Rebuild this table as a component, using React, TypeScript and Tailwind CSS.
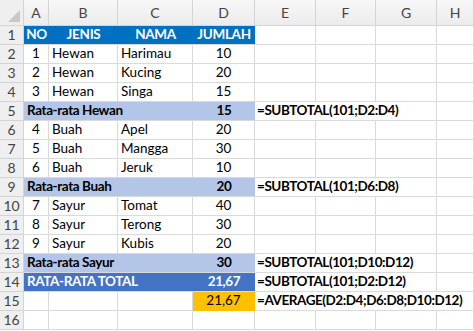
import type { ReactNode } from 'react';

const COLS = ['A', 'B', 'C', 'D', 'E', 'F', 'G', 'H'];

type Row =
  | { kind: 'head' }
  | { kind: 'data'; no: string; jenis: string; nama: string; jumlah: string }
  | { kind: 'sub'; label: string; value: string; formula: string; total?: boolean }
  | { kind: 'avg'; value: string; formula: string }
  | { kind: 'empty' };

const ROWS: Row[] = [
  { kind: 'head' },
  { kind: 'data', no: '1', jenis: 'Hewan', nama: 'Harimau', jumlah: '10' },
  { kind: 'data', no: '2', jenis: 'Hewan', nama: 'Kucing', jumlah: '20' },
  { kind: 'data', no: '3', jenis: 'Hewan', nama: 'Singa', jumlah: '15' },
  { kind: 'sub', label: 'Rata-rata Hewan', value: '15', formula: '=SUBTOTAL(101;D2:D4)' },
  { kind: 'data', no: '4', jenis: 'Buah', nama: 'Apel', jumlah: '20' },
  { kind: 'data', no: '5', jenis: 'Buah', nama: 'Mangga', jumlah: '30' },
  { kind: 'data', no: '6', jenis: 'Buah', nama: 'Jeruk', jumlah: '10' },
  { kind: 'sub', label: 'Rata-rata Buah', value: '20', formula: '=SUBTOTAL(101;D6:D8)' },
  { kind: 'data', no: '7', jenis: 'Sayur', nama: 'Tomat', jumlah: '40' },
  { kind: 'data', no: '8', jenis: 'Sayur', nama: 'Terong', jumlah: '30' },
  { kind: 'data', no: '9', jenis: 'Sayur', nama: 'Kubis', jumlah: '20' },
  { kind: 'sub', label: 'Rata-rata Sayur', value: '30', formula: '=SUBTOTAL(101;D10:D12)' },
  { kind: 'sub', label: 'RATA-RATA TOTAL', value: '21,67', formula: '=SUBTOTAL(101;D2:D12)', total: true },
  { kind: 'avg', value: '21,67', formula: '=AVERAGE(D2:D4;D6:D8;D10:D12)' },
  { kind: 'empty' },
];

// plain grid cell with excel-ish gridlines
function Cell({ className = '', children }: { className?: string; children?: ReactNode }) {
  return (
    <div className={`h-[19px] border-r border-b border-[#dadada] flex items-center overflow-hidden whitespace-nowrap ${className}`}>
      {children}
    </div>
  );
}

function RowHeader({ n }: { n: number }) {
  return (
    <div className="h-[19px] bg-[#efefef] border-r border-b border-[#d4d4d4] flex items-center justify-center text-[14px] text-[#444]">
      {n}
    </div>
  );
}

function Blank({ n }: { n: number }) {
  return (
    <>
      {Array.from({ length: n }).map((_, i) => (
        <Cell key={i} />
      ))}
    </>
  );
}

function SheetRow({ row, n }: { row: Row; n: number }) {
  if (row.kind === 'head') {
    return (
      <>
        <RowHeader n={n} />
        <div className="col-span-4 h-[19px] bg-[#0070c0] border-b border-[#dadada] grid grid-cols-[25px_69px_75px_62px] items-center text-white font-bold tracking-[-0.3px]">
          <span className="text-center">NO</span>
          <span className="text-center">JENIS</span>
          <span className="text-center">NAMA</span>
          <span className="text-center">JUMLAH</span>
        </div>
        <Blank n={4} />
      </>
    );
  }
  if (row.kind === 'data') {
    return (
      <>
        <RowHeader n={n} />
        <Cell className="justify-center">{row.no}</Cell>
        <Cell className="pl-[3px]">{row.jenis}</Cell>
        <Cell className="pl-[3px]">{row.nama}</Cell>
        <Cell className="justify-center">{row.jumlah}</Cell>
        <Blank n={4} />
      </>
    );
  }
  if (row.kind === 'sub') {
    const bg = row.total ? 'bg-[#4472c4] text-white' : 'bg-[#b4c6e7] text-black';
    return (
      <>
        <RowHeader n={n} />
        <div className={`col-span-4 h-[19px] border-b border-[#dadada] grid grid-cols-[169px_62px] items-center font-bold tracking-[-0.4px] ${bg}`}>
          <span className="pl-[3px]">{row.label}</span>
          <span className="text-center">{row.value}</span>
        </div>
        <Cell className="col-span-3 pl-[2px] font-bold tracking-[-0.45px]">{row.formula}</Cell>
        <Cell />
      </>
    );
  }
  if (row.kind === 'avg') {
    return (
      <>
        <RowHeader n={n} />
        <Blank n={3} />
        <Cell className="justify-center bg-[#ffc000] border-[#ffc000]">{row.value}</Cell>
        <Cell className="col-span-4 pl-[2px] font-bold tracking-[-0.45px]">{row.formula}</Cell>
      </>
    );
  }
  return (
    <>
      <RowHeader n={n} />
      <Blank n={8} />
    </>
  );
}

export default function App() {
  return (
    <div className="w-[474px] h-[331px] overflow-hidden bg-white text-[13.5px] leading-none text-black font-['Lato','Liberation_Sans',sans-serif]">
      <div className="grid grid-cols-[24px_25px_69px_75px_62px_61px_60px_61px_37px]">
        {/* corner */}
        <div className="h-[26px] bg-[#efefef] border-r border-b border-[#d4d4d4] relative">
          <svg className="absolute right-[3px] bottom-[3px]" width="12" height="12" viewBox="0 0 12 12">
            <polygon points="12,0 12,12 0,12" fill="#c8c8c8" />
          </svg>
        </div>
        {COLS.map((c) => (
          <div
            key={c}
            className="h-[26px] bg-gradient-to-b from-[#f7f7f7] to-[#ececec] border-r border-b border-[#d4d4d4] flex items-end justify-center pb-[5px] text-[14px] text-[#444]"
          >
            {c}
          </div>
        ))}
        {ROWS.map((r, i) => (
          <SheetRow key={i} row={r} n={i + 1} />
        ))}
      </div>
    </div>
  );
}
